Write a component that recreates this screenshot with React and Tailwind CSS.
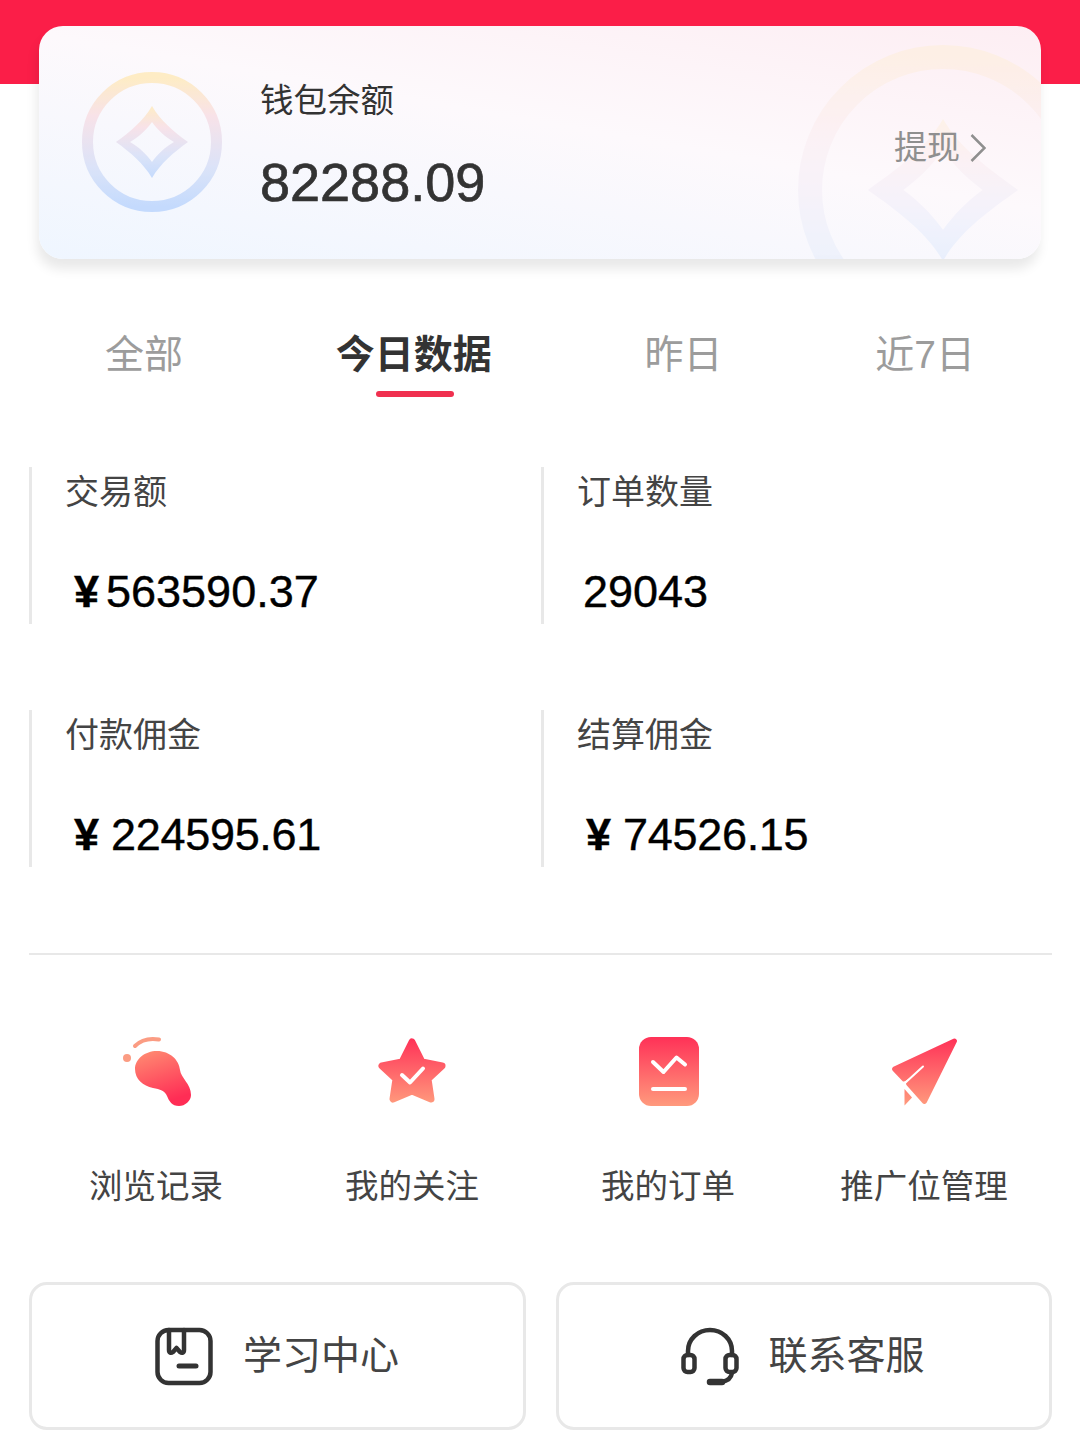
const FONT = "font-['Liberation_Sans','Noto_Sans_CJK_SC',sans-serif]";

const STATS = [
  { label: "交易额", yen: "¥", value: "563590.37", yenClass: "w-[32px]" },
  { label: "订单数量", value: "29043" },
  { label: "付款佣金", yen: "¥", value: "224595.61", yenClass: "w-[37px]", tight: true },
  { label: "结算佣金", yen: "¥", value: "74526.15", yenClass: "w-[37px]", tight: true },
];

function Coin({ id, className, viewBox, ring, diamond, sw }) {
  return (
    <svg className={className} viewBox={viewBox} fill="none">
      <defs>
        <linearGradient id={id} x1="0" y1="0" x2="0" y2="1">
          <stop offset="0" stopColor="#ffeab8" />
          <stop offset="0.3" stopColor="#f8dde4" />
          <stop offset="0.7" stopColor="#d5dff8" />
          <stop offset="1" stopColor="#b9d4fd" />
        </linearGradient>
      </defs>
      <circle cx="70" cy="70" r={ring} stroke={`url(#${id})`} strokeWidth={sw} />
      <path d={diamond} fill={`url(#${id})`} fillRule="evenodd" />
    </svg>
  );
}

function FootIcon() {
  return (
    <svg className="h-[80px] w-[80px]" viewBox="116 1032 80 80" fill="none">
      <defs>
        <linearGradient id="foot" x1="0" y1="0" x2="0.35" y2="1">
          <stop offset="0" stopColor="#ff8f73" />
          <stop offset="1" stopColor="#ff2d55" />
        </linearGradient>
      </defs>
      <circle cx="127" cy="1058" r="4" fill="#fb9c83" />
      <path d="M135 1046C141 1040 150 1038 159 1039.5" stroke="#fb9c83" strokeWidth="4" strokeLinecap="round" />
      <path
        d="M157 1051C170 1051 179 1060 180 1070C181 1078 191 1084 191 1095C191 1101 185 1106 179 1106C172 1106 169 1101 167 1096C165 1091 160 1089 153 1088C143 1086 135 1079 135 1069C135 1059 145 1051 157 1051Z"
        fill="url(#foot)"
      />
    </svg>
  );
}

function StarIcon() {
  return (
    <svg className="h-[80px] w-[80px]" viewBox="372 1032 80 80" fill="none">
      <defs>
        <linearGradient id="star" gradientUnits="userSpaceOnUse" x1="412" y1="1038" x2="412" y2="1104">
          <stop offset="0" stopColor="#ff3157" />
          <stop offset="1" stopColor="#ff9a7d" />
        </linearGradient>
      </defs>
      <path
        d="M412 1042L422 1062L442 1066L428 1079L431 1099L412 1091L393 1099L396 1079L382 1066L402 1062Z"
        fill="url(#star)"
        stroke="url(#star)"
        strokeWidth="7"
        strokeLinejoin="round"
      />
      <path d="M402 1075L410 1082.5L423 1068.5" stroke="#fff" strokeWidth="4" strokeLinecap="round" strokeLinejoin="round" />
    </svg>
  );
}

function OrderIcon() {
  return (
    <svg className="h-[80px] w-[80px]" viewBox="628 1032 80 80" fill="none">
      <defs>
        <linearGradient id="order" x1="0" y1="0" x2="0" y2="1">
          <stop offset="0" stopColor="#ff3157" />
          <stop offset="1" stopColor="#ff9a7d" />
        </linearGradient>
      </defs>
      <rect x="639" y="1037" width="60" height="69" rx="12" fill="url(#order)" />
      <path d="M653 1062L663.5 1072L676.5 1057.5L685 1064.5" stroke="#fff" strokeWidth="4" strokeLinecap="round" strokeLinejoin="round" />
      <path d="M653 1089H685" stroke="#fff" strokeWidth="4" strokeLinecap="round" />
    </svg>
  );
}

function PlaneIcon() {
  return (
    <svg className="h-[80px] w-[80px]" viewBox="884 1032 80 80" fill="none">
      <defs>
        <linearGradient id="plane" gradientUnits="userSpaceOnUse" x1="925" y1="1038" x2="925" y2="1105">
          <stop offset="0" stopColor="#ff3157" />
          <stop offset="1" stopColor="#ff9a7d" />
        </linearGradient>
      </defs>
      <path
        d="M954.5 1041L924.5 1101.5L908.5 1083.5L923 1066.5L904 1079L894.5 1069Z"
        fill="url(#plane)"
        stroke="url(#plane)"
        strokeWidth="5"
        strokeLinejoin="round"
      />
      <path d="M923 1066.5L905 1083" stroke="#fff" strokeWidth="2" strokeLinecap="round" />
      <path d="M904.5 1089L912 1097.5L904.5 1105.5Z" fill="url(#plane)" />
    </svg>
  );
}

function BookIcon() {
  return (
    <svg className="h-[62px] w-[62px]" viewBox="154 1325 62 62" fill="none" stroke="#333" strokeWidth="4.5" strokeLinecap="round" strokeLinejoin="round">
      <rect x="158.5" y="1330" width="53" height="53" rx="11" />
      <path d="M170 1330V1350C170 1353 172 1353.5 174 1352L177.5 1348L181 1352C183 1353.5 185 1353 185 1350V1330" />
      <path d="M180 1366H197" strokeWidth="5" />
    </svg>
  );
}

function HeadsetIcon() {
  return (
    <svg className="h-[62px] w-[62px]" viewBox="679 1325 62 62" fill="none" stroke="#333" strokeWidth="4.5" strokeLinecap="round" strokeLinejoin="round">
      <path d="M688 1355V1351C688 1339 698 1330 710 1330C722 1330 732 1339 732 1351V1355" />
      <rect x="683.5" y="1355" width="11" height="17" rx="4" />
      <rect x="725.5" y="1355" width="11" height="17" rx="4" />
      <path d="M732 1373C731 1379 727 1381 722 1381.5H714" />
      <path d="M710 1382H722" strokeWidth="6.5" />
    </svg>
  );
}

const MENU = [
  { label: "浏览记录", Icon: FootIcon },
  { label: "我的关注", Icon: StarIcon },
  { label: "我的订单", Icon: OrderIcon },
  { label: "推广位管理", Icon: PlaneIcon },
];

export default function App() {
  return (
    <div className={`h-[1440px] w-[1080px] overflow-hidden bg-white ${FONT}`}>
      <div className="h-[84px] bg-[#fb1e48]" />

      <div className="relative mx-[39px] -mt-[58px] flex h-[233px] items-start overflow-hidden rounded-[24px] bg-[linear-gradient(190deg,#fdeef3_0%,#fdf9fc_45%,#eff6ff_100%)] shadow-[-2px_10px_12px_rgba(0,0,0,0.09)]">
        <Coin
          id="coinBig"
          className="absolute left-[758px] top-[18px] h-[292px] w-[292px] opacity-25"
          viewBox="0 0 140 140"
          ring="63.75"
          sw="11.5"
          diamond="M70 36C78 50 92 60 106 70C92 80 78 90 70 104C62 90 48 80 34 70C48 60 62 50 70 36ZM70 51C64 59 59 64 51 70C59 76 64 81 70 89C76 81 81 76 89 70C81 64 76 59 70 51Z"
        />
        <Coin
          id="coinSmall"
          className="relative ml-[43px] mt-[46px] h-[140px] w-[140px] opacity-80"
          viewBox="0 0 140 140"
          ring="64.5"
          sw="11"
          diamond="M70 34C78 48 92 60 106 70C92 80 78 92 70 106C62 92 48 80 34 70C48 60 62 48 70 34ZM70 50C64 58 58 64 48 70C58 76 64 82 70 90C76 82 82 76 92 70C82 64 76 58 70 50Z"
        />
        <div className="relative ml-[38px] mt-[51px] text-[#333]">
          <div className="text-[33.5px] leading-[48px]">钱包余额</div>
          <div className="mt-[22px] text-[54px] leading-[70px] [-webkit-text-stroke:0.7px_#333]">82288.09</div>
        </div>
        <div className="relative ml-auto mr-[55px] mt-[98px] flex items-center gap-[10px] text-[33px] leading-[48px] text-[#8f8f8f]">
          提现
          <svg className="h-[30px] w-[16px]" viewBox="0 0 16 30" fill="none" stroke="#8f8f8f" strokeWidth="2.5">
            <path d="M1.5 2L14.5 15L1.5 28" />
          </svg>
        </div>
      </div>

      <div className="mt-[70px] flex items-start justify-between px-[105px] text-[39px] leading-[52px] text-[#9c9c9c]">
        <span>全部</span>
        <span className="relative font-bold text-[#333]">
          今日数据
          <span className="absolute left-[40px] top-[62px] h-[6px] w-[78px] rounded-full bg-[#f0304f]" />
        </span>
        <span>昨日</span>
        <span>近7日</span>
      </div>

      <div className="ml-[29px] mt-[86px] grid w-[1024px] grid-cols-2 gap-y-[86px]">
        {STATS.map((s) => (
          <div key={s.label} className="h-[157px] border-l-[3px] border-[#e8e8e8] pl-[33px]">
            <div className="mt-[1px] text-[34px] leading-[48px] text-[#444]">{s.label}</div>
            <div className={`mt-[51px] flex h-[50px] items-center pl-[6px] text-[45px] leading-[50px] text-black [-webkit-text-stroke:0.4px_#000] ${s.tight ? "tracking-[-0.3px]" : ""}`}>
              {s.yen && <span className={`${s.yenClass} ml-[3px] font-bold`}>{s.yen}</span>}
              {s.value}
            </div>
          </div>
        ))}
      </div>

      <div className="ml-[29px] mt-[86px] h-[2px] w-[1023px] bg-[#e8e8e8]" />

      <div className="ml-[28px] mt-[77px] grid w-[1024px] grid-cols-4">
        {MENU.map(({ label, Icon }) => (
          <div key={label} className="flex flex-col items-center">
            <Icon />
            <div className="mt-[51px] text-[33.5px] leading-[48px] text-[#444]">{label}</div>
          </div>
        ))}
      </div>

      <div className="ml-[29px] mt-[71px] flex w-[1023px] gap-[30px]">
        <div className="flex h-[148px] w-[497px] items-center justify-center gap-[28px] rounded-[18px] border-[3px] border-[#e8e8e8] pr-[3px] text-[39px] text-[#444]">
          <BookIcon />
          学习中心
        </div>
        <div className="flex h-[148px] w-[496px] items-center justify-center gap-[27px] rounded-[18px] border-[3px] border-[#e8e8e8] pr-[4px] text-[39px] text-[#444]">
          <HeadsetIcon />
          联系客服
        </div>
      </div>
    </div>
  );
}
